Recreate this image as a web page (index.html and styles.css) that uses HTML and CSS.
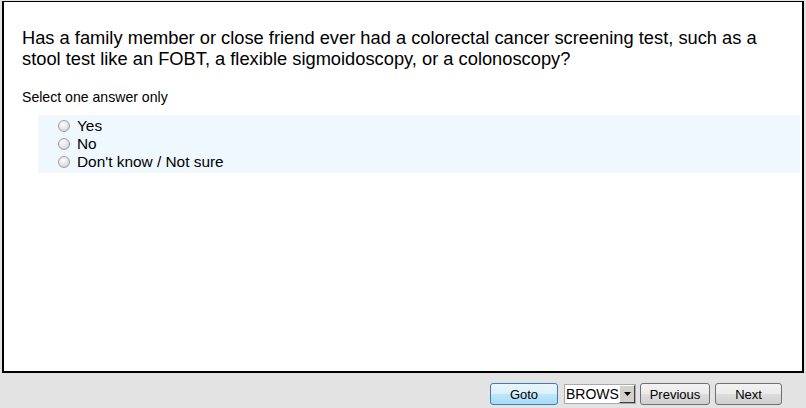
FILE: index.html
```html
<!DOCTYPE html>
<html lang="en">
<head>
    <meta charset="UTF-8">
    <title>Survey</title>
    <link rel="stylesheet" href="styles.css">
</head>
<body>
    <div class="frame">
        <div class="question">Has a family member or close friend ever had a colorectal cancer screening test, such as a stool test like an FOBT, a flexible sigmoidoscopy, or a colonoscopy?</div>
        <div class="hint">Select one answer only</div>
        <div class="answers">
            <label class="answer"><input type="radio" name="q1"> Yes</label>
            <label class="answer"><input type="radio" name="q1"> No</label>
            <label class="answer"><input type="radio" name="q1"> Don't know / Not sure</label>
        </div>
    </div>
    <div class="nav">
        <button class="btn goto">Goto</button>
        <div class="picker">
            <span class="picker-text">BROWS</span>
            <span class="picker-arrow"><svg width="7" height="4" viewBox="0 0 7 4"><path d="M0 0h7L3.5 4z" fill="#000"/></svg></span>
        </div>
        <button class="btn prev">Previous</button>
        <button class="btn next">Next</button>
    </div>
</body>
</html>
```
FILE: styles.css
```css
body {
    margin: 0;
    width: 806px;
    height: 408px;
    background-color: #e3e3e3;
    font-family: "Liberation Sans", Arial, sans-serif;
    color: #000;
    overflow: hidden;
    display: flex;
    flex-direction: column;
}
.frame {
    margin: 1px 2px 0 2px;
    height: 372px;
    flex-shrink: 0;
    box-sizing: border-box;
    background-color: #fff;
    border: 2px solid #000;
    border-top: 1px solid #000;
    padding: 25px 40px 0 18px;
}
.question {
    font-size: 18.3px;
    line-height: 21px;
}
.hint {
    font-size: 14.1px;
    margin-top: 20px;
    line-height: 16px;
}
.answers {
    margin: 10px -38px 0 16px;
    padding: 2px 0 2px 18px;
    background-color: #f0f8ff;
}
.answer {
    display: flex;
    align-items: center;
    height: 18px;
    font-size: 15.4px;
    line-height: 18px;
    gap: 7px;
}
.answer input {
    appearance: none;
    margin: 0 0 0 2px;
    width: 12px;
    height: 12px;
    border-radius: 50%;
    border: 1px solid #a0a0a0;
    background: radial-gradient(circle at 40% 35%, #fdfdfd 0%, #e8e8e8 45%, #c4c4c4 100%);
    box-sizing: border-box;
}
.nav {
    display: flex;
    justify-content: flex-end;
    align-items: center;
    padding: 10px 24px 0 0;
}
.btn {
    font-family: "Liberation Sans", Arial, sans-serif;
    font-size: 13px;
    height: 22px;
    padding: 0;
    border: 1px solid #707070;
    border-radius: 3px;
    background: linear-gradient(#f2f2f2 0%, #ebebeb 50%, #dddddd 51%, #cfcfcf 100%);
    color: #000;
}
.goto {
    width: 68px;
    border-color: #3c7fb1;
    background: linear-gradient(#eaf6fd 0%, #d9f0fc 50%, #bee6fd 51%, #a7d9f5 100%);
    margin-right: 6px;
}
.prev {
    width: 70px;
    margin-left: 4px;
    margin-right: 5px;
}
.next {
    width: 67px;
}
.picker {
    width: 72px;
    height: 20px;
    box-sizing: border-box;
    border: 1px solid #a5acb5;
    background-color: #fff;
    display: flex;
    font-size: 14px;
}
.picker-text {
    flex: 1;
    white-space: nowrap;
    padding-left: 1px;
    line-height: 18px;
}
.picker-arrow {
    width: 16px;
    box-sizing: border-box;
    border: 1px solid #fff;
    border-right-color: #404040;
    border-bottom-color: #404040;
    background-color: #d4d0c8;
    display: flex;
    align-items: center;
    justify-content: center;
}
```
